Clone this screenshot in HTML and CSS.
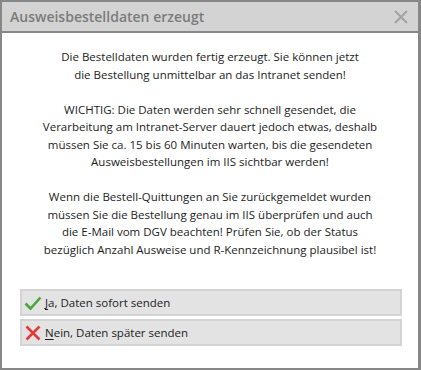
FILE: index.html
```html
<!DOCTYPE html>
<html lang="de">
<head>
    <meta charset="UTF-8">
    <title>Ausweisbestelldaten erzeugt</title>
    <link rel="stylesheet" href="styles.css">
</head>
<body>
    <div class="dialog">
        <div class="titlebar">
            <span class="title">Ausweisbestelldaten erzeugt</span>
            <svg class="close" width="16" height="16" viewBox="0 0 16 16">
                <path d="M2 2 L14 14 M14 2 L2 14" stroke="#a3a3a3" stroke-width="2" fill="none"/>
            </svg>
        </div>
        <div class="content">
            <div class="message">
                <p>Die Bestelldaten wurden fertig erzeugt. Sie können jetzt<br>die Bestellung unmittelbar an das Intranet senden!</p>
                <p>WICHTIG: Die Daten werden sehr schnell gesendet, die<br>Verarbeitung am Intranet-Server dauert jedoch etwas, deshalb<br>müssen Sie ca. 15 bis 60 Minuten warten, bis die gesendeten<br>Ausweisbestellungen im IIS sichtbar werden!</p>
                <p>Wenn die Bestell-Quittungen an Sie zurückgemeldet wurden<br>müssen Sie die Bestellung genau im IIS überprüfen und auch<br>die E-Mail vom DGV beachten! Prüfen Sie, ob der Status<br>bezüglich Anzahl Ausweise und R-Kennzeichnung plausibel ist!</p>
            </div>
            <div class="actions">
                <button class="action">
                    <svg class="icon" width="18" height="18" viewBox="0 0 18 18">
                        <path d="M1.5 9.5 L6.5 14.5 L16.5 3.5" stroke="#4aa63a" stroke-width="2.6" fill="none"/>
                    </svg>
                    <span><u>J</u>a, Daten sofort senden</span>
                </button>
                <button class="action">
                    <svg class="icon" width="18" height="18" viewBox="0 0 18 18">
                        <path d="M2.5 2.5 L15.5 15.5 M15.5 2.5 L2.5 15.5" stroke="#e23a3a" stroke-width="2.6" fill="none"/>
                    </svg>
                    <span><u>N</u>ein, Daten später senden</span>
                </button>
            </div>
        </div>
    </div>
</body>
</html>
```

FILE: styles.css
```css
html, body {
    margin: 0;
    padding: 0;
}
body {
    font-family: "Open Sans", "DejaVu Sans", sans-serif;
    background: #fff;
}
.dialog {
    width: 421px;
    height: 370px;
    box-sizing: border-box;
    border: 2px solid #878787;
    border-right-width: 3px;
    display: flex;
    flex-direction: column;
}
.titlebar {
    height: 29px;
    background: #d3d3d3;
    border-bottom: 2px solid #878787;
    display: flex;
    align-items: center;
    justify-content: space-between;
    padding: 0 9px 0 8px;
}
.title {
    font-size: 14px;
    font-weight: 600;
    color: #7b7b7b;
}
.content {
    flex: 1;
    background: #fff;
    padding-top: 15px;
}
.message {
    text-align: center;
    font-size: 11.5px;
    line-height: 17.5px;
    color: #1c1c24;
}
.message p {
    margin: 0 0 17.5px;
}
.message p:last-child {
    margin-bottom: 0;
}
.actions {
    display: flex;
    flex-direction: column;
    gap: 3px;
    margin: 31px 16px 0 18px;
}
.action {
    height: 27px;
    box-sizing: border-box;
    background: #e3e3e3;
    border: 2px solid #d4d4d4;
    display: flex;
    align-items: center;
    gap: 3px;
    padding: 0 0 0 2px;
    font-family: "Open Sans", "DejaVu Sans", sans-serif;
    font-size: 11.5px;
    color: #1c1c24;
    text-align: left;
}
.action u {
    text-underline-offset: 2px;
}
```
